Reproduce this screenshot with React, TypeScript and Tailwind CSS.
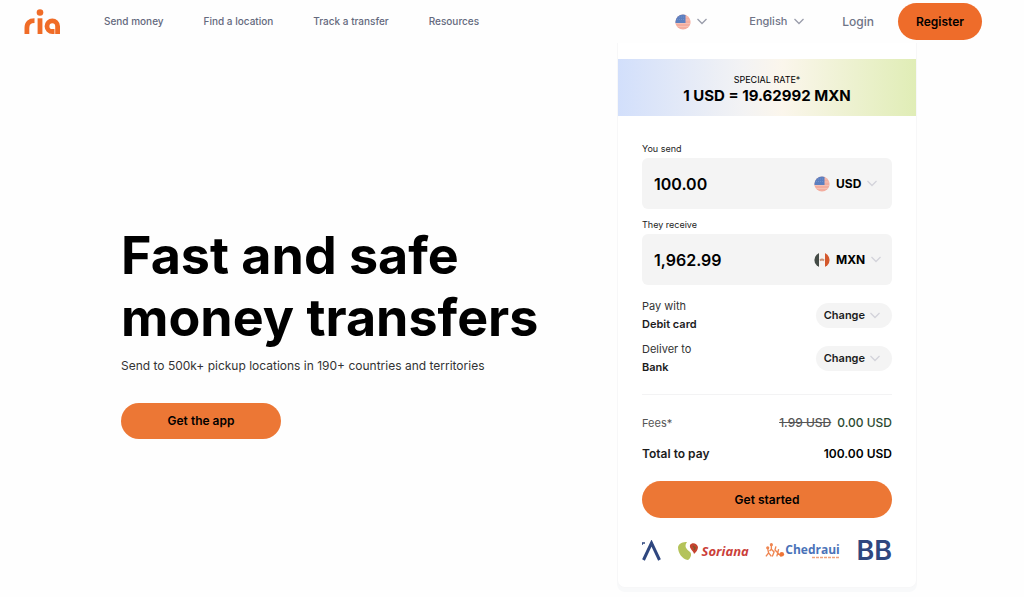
const navLinks = ["Send money", "Find a location", "Track a transfer", "Resources"];

const deliveryOptions = [
  { label: "Pay with", value: "Debit card" },
  { label: "Deliver to", value: "Bank" },
];

const Chevron = ({ className = "" }: any) => (
  <svg
    width="10"
    height="7"
    viewBox="0 0 10 7"
    fill="none"
    stroke="currentColor"
    strokeWidth="1.300"
    className={`pointer-events-none shrink-0 ${className}`}
  >
    <path d="M0.500 1L5 5.500L9.500 1" />
  </svg>
);

const RiaLogo = () => (
  <svg width="37" height="26" viewBox="0 0 37 26" fill="none" stroke="#f06c27" strokeWidth="4.800">
    <path d="M2.900 25V19C2.900 14 5.500 11.700 10.500 11.700" />
    <path d="M16 9.300V25" />
    <circle cx="16" cy="3.500" r="3.300" fill="#f06c27" stroke="none" />
    <path d="M33.600 25V17.200A5.300 5.300 0 1 0 28.300 22.500H30.500" />
  </svg>
);

const UsFlag = () => (
  <svg width="16" height="16" viewBox="0 0 16 16">
    <clipPath id="us-circle">
      <circle cx="8" cy="8" r="7.600" />
    </clipPath>
    <g clipPath="url(#us-circle)">
      <rect width="16" height="16" fill="#f3ad9f" />
      <path d="M0 3H16M0 6H16M0 9.500H16M0 12.500H16" stroke="#f6c0b3" strokeWidth="1" />
      <rect width="10.500" height="9" fill="#5c7fc0" />
      <path d="M2 3H10M2 5.500H10" stroke="#7290c8" strokeWidth="1" strokeDasharray="1 1" />
    </g>
  </svg>
);

const MxFlag = () => (
  <svg width="16" height="16" viewBox="0 0 16 16">
    <clipPath id="mx-circle">
      <circle cx="8" cy="8" r="7.600" />
    </clipPath>
    <g clipPath="url(#mx-circle)">
      <rect width="16" height="16" fill="#f6f3f1" />
      <rect width="5" height="16" fill="#444b46" />
      <rect x="11" width="5" height="16" fill="#d4572b" />
      <path d="M6 8.500Q8 6.500 10 8.500" stroke="#c98f74" strokeWidth="1.800" fill="none" />
    </g>
  </svg>
);

const SorianaLogo = () => (
  <div className="flex items-center gap-1">
    <svg width="20" height="20" viewBox="0 0 20 20">
      <path d="M0 6C1 2 5 1 9 1C6 5 8 8 12 11C14 13 13 17 10 19C4 18 0 12 0 6Z" fill="#b4c35a" />
      <path d="M12 4C14 1 19 2 20 6C20 9 18 11 16 13C16 10 11 8 12 4Z" fill="#c5432f" />
      <path d="M15 5L17 7L16 9" stroke="#7c5a2c" strokeWidth="1.500" fill="none" />
    </svg>
    <span className="font-['Open_Sans',sans-serif] text-[13px] leading-[20px] font-bold text-[#cb3f3a] italic">
      Soriana
    </span>
  </div>
);

const ChedrauiLogo = () => (
  <div className="flex items-center">
    <svg width="20" height="18" viewBox="0 0 22 18" fill="none" stroke="#ef8550" strokeWidth="1.500">
      <path d="M1 15L4 11L3 7M4 11L7 15M7 3V7L5 9M7 7L10 10L8 15M12 4L11 8L14 11L13 15M15 7L14 11L18 15" />
      <circle cx="3" cy="5.500" r="1" fill="#ef8550" />
      <circle cx="7" cy="2" r="1" fill="#ef8550" />
      <circle cx="18.500" cy="12.500" r="2.500" fill="#ef7436" stroke="none" />
    </svg>
    <div className="flex flex-col items-end">
      <span className="font-['Open_Sans',sans-serif] text-[12px] leading-[12px] font-bold text-[#4a72b8]">
        Chedraui
      </span>
      <svg width="28" height="3" viewBox="0 0 28 3">
        <path d="M0 1.500H28" stroke="#f0a27c" strokeWidth="1.500" strokeDasharray="3 1" />
      </svg>
    </div>
  </div>
);

const AmountField = ({ id, label, amount, currency, flag }: any) => (
  <div className="flex flex-col gap-px">
    <label htmlFor={id} className="text-[9px] leading-[16px] text-[#222222]">
      {label}
    </label>
    <div className="flex h-[51px] items-center justify-between rounded-[6px] bg-[#f4f4f4] pr-2 pl-3">
      <input
        id={id}
        defaultValue={amount}
        className="w-full min-w-0 bg-transparent text-[16px] font-semibold text-black outline-none"
      />
      <div className="flex w-[70px] shrink-0 items-center gap-[6px]">
        {flag}
        <div className="flex items-center gap-[5px]">
          <select
            aria-label={`${label} currency`}
            className="appearance-none bg-transparent text-[12px] font-bold text-black outline-none"
          >
            <option>{currency}</option>
          </select>
          <Chevron className="text-[#d3d3da]" />
        </div>
      </div>
    </div>
  </div>
);

const Header = () => (
  <header className="flex h-[43px] items-center justify-between pr-[42px] pl-6">
    <div className="flex items-center gap-[43px]">
      <a href="#" aria-label="Ria home">
        <RiaLogo />
      </a>
      <nav className="flex gap-10 text-[10px] font-medium text-[#64697d]">
        {navLinks.map((item) => (
          <a key={item} href="#">
            {item}
          </a>
        ))}
      </nav>
    </div>

    <div className="flex items-center text-[#6f7487]">
      <button aria-label="Country" className="flex items-center gap-[6px]">
        <UsFlag />
        <Chevron className="text-[#9a9dab]" />
      </button>
      <div className="ml-[42px] flex items-center gap-[6px]">
        <select
          aria-label="Language"
          className="appearance-none bg-transparent text-[11px] font-medium outline-none"
        >
          <option>English</option>
        </select>
        <Chevron className="text-[#9a9dab]" />
      </div>
      <a href="#" className="ml-[38px] text-[12px] font-medium">
        Login
      </a>
      <button className="ml-6 h-[37px] rounded-full bg-[#ee6c2a] px-[18px] text-[12px] font-semibold text-black">
        Register
      </button>
    </div>
  </header>
);

const Hero = () => (
  <section className="pt-[182px]">
    <h1 className="text-[52px] leading-[62px] font-bold text-black">
      Fast and safe
      <br />
      money transfers
    </h1>
    <p className="mt-2 text-[12px] leading-[18px] text-[#333333]">
      Send to 500k+ pickup locations in 190+ countries and territories
    </p>
    <button className="mt-7 h-9 w-40 rounded-full bg-[#ec7735] text-[12px] font-semibold text-black">
      Get the app
    </button>
  </section>
);

const Calculator = () => (
  <section className="w-[300px] shrink-0 rounded-b-[8px] border-x border-b border-[#f7f7f8] bg-white pt-4 shadow-[0_4px_0_#f8f9fa]">
    {/* rate banner */}
    <div className="flex h-[57px] flex-col items-center justify-center bg-[linear-gradient(90deg,#d2dffb,#f3f3f4_42%,#fbf6ec_55%,#e0edb6)] pt-1 text-black">
      <span className="text-[9px] leading-[12px]">SPECIAL RATE*</span>
      <span className="text-[15px] leading-[20px] font-bold">1 USD = 19.62992 MXN</span>
    </div>

    <div className="px-6 pt-[25px] pb-6">
      <div className="flex flex-col gap-2">
        <AmountField id="send" label="You send" amount="100.00" currency="USD" flag={<UsFlag />} />
        <AmountField id="receive" label="They receive" amount="1,962.99" currency="MXN" flag={<MxFlag />} />
      </div>

      {/* payment & delivery */}
      <div className="mt-3 flex flex-col gap-[7px] border-b border-[#f3f3f4] pb-[18px]">
        {deliveryOptions.map(({ label, value }) => (
          <div key={label} className="flex items-center justify-between">
            <div className="flex flex-col text-[11px] leading-[18px] text-[#333333]">
              <span>{label}</span>
              <span className="font-semibold text-[#1c1c1c]">{value}</span>
            </div>
            <button className="flex h-[25px] items-center gap-[5px] rounded-full bg-[#f4f4f4] pr-3 pl-2 text-[11px] font-semibold text-[#1c1c1c]">
              Change
              <Chevron className="text-[#d3d3da]" />
            </button>
          </div>
        ))}
      </div>

      {/* totals */}
      <div className="mt-5 flex flex-col gap-[15px] text-[12px] leading-[16px] text-[#1c1c1c]">
        <div className="flex items-center justify-between">
          <span className="text-[11px] text-[#555555]">Fees*</span>
          <div className="flex gap-[6px] font-medium">
            <s className="text-[#555555]">1.99 USD</s>
            <span className="text-[#2c4a31]">0.00 USD</span>
          </div>
        </div>
        <div className="flex items-center justify-between font-semibold">
          <span>Total to pay</span>
          <span className="text-black">100.00 USD</span>
        </div>
      </div>

      <button className="mt-[19px] h-[37px] w-full rounded-full bg-[#ec7735] text-[12px] font-semibold text-black">
        Get started
      </button>

      {/* partners */}
      <div className="mt-[21px] flex h-6 items-center justify-between">
        <svg width="19" height="22" viewBox="0 0 19 22" fill="none" stroke="#2f477f" strokeWidth="3">
          <path d="M1.500 20L9.500 3L17.500 20" />
          <path d="M0 5V3H3" strokeWidth="1.500" />
        </svg>
        <SorianaLogo />
        <ChedrauiLogo />
        <span className="text-[27px] leading-[24px] font-semibold text-[#2f477f]">BB</span>
      </div>
    </div>
  </section>
);

const App = () => {
  return (
    <div className="min-h-screen bg-[#fefefe] font-[Inter,sans-serif]">
      <Header />
      <main className="flex justify-between pr-[107px] pb-1 pl-[121px]">
        <Hero />
        <Calculator />
      </main>
    </div>
  );
};

export default App;
